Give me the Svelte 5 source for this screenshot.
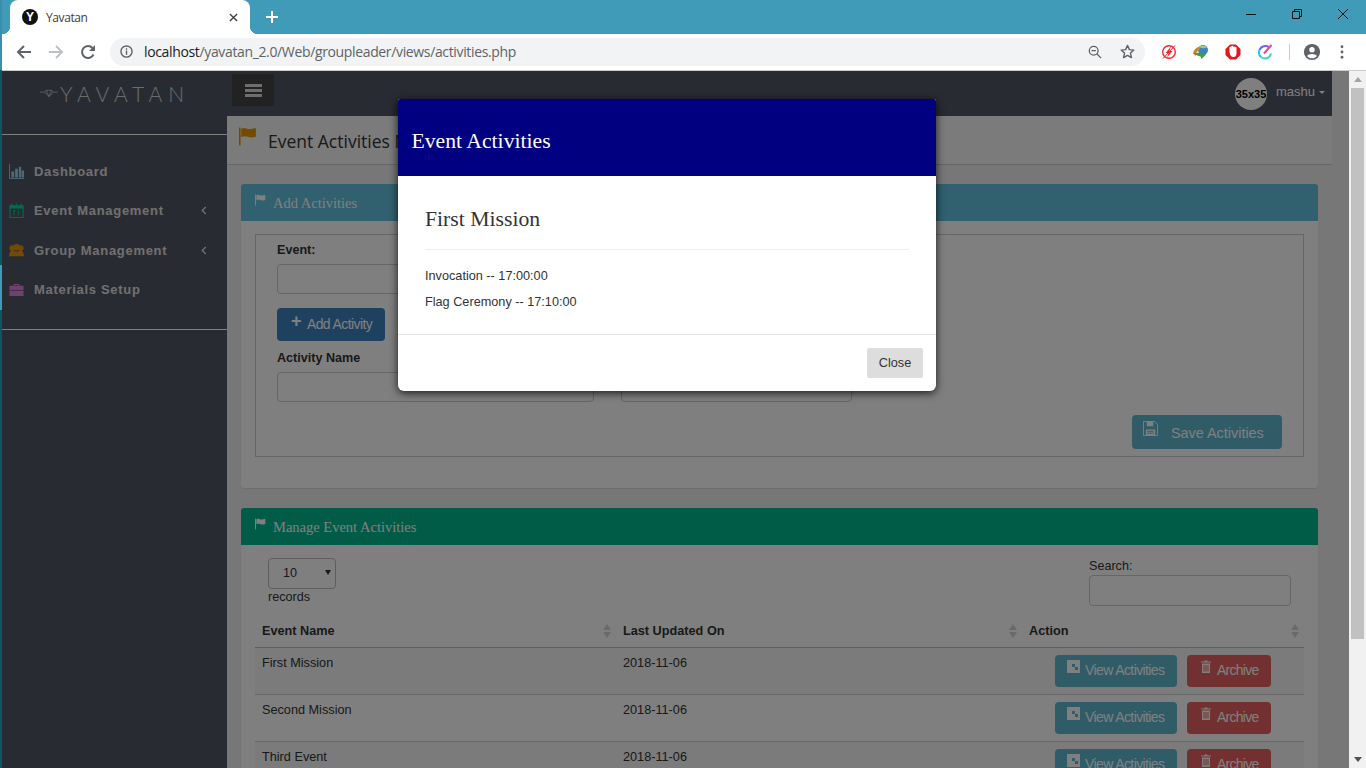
<script lang="ts">
  const navItems = [
    { label: "Dashboard", icon: "chart", more: false },
    { label: "Event Management", icon: "calendar", more: true },
    { label: "Group Management", icon: "group", more: true },
    { label: "Materials Setup", icon: "case", more: false }
  ];

  const events = [
    { name: "First Mission", updated: "2018-11-06" },
    { name: "Second Mission", updated: "2018-11-06" },
    { name: "Third Event", updated: "2018-11-06" }
  ];

  const activities = ["Invocation -- 17:00:00", "Flag Ceremony -- 17:10:00"];
</script>

{#snippet flag(cls)}
  <svg class={cls} viewBox="0 0 16 16" aria-hidden="true">
    <rect x="0" y="0" width="1.4" height="16" fill="currentColor" />
    <path d="M2 1c2-1 3-.6 5 0s3 .6 6-.4l2 0v7.4c-3 1.2-5 1-7 .3s-3.500-.8-6 .2z" fill="currentColor" />
  </svg>
{/snippet}

{#snippet sortArrows()}
  <svg class="sort" viewBox="0 0 8 14" aria-hidden="true">
    <path d="M4 0l4 6H0zM4 14l4-6H0z" fill="currentColor" />
  </svg>
{/snippet}

<div class="screen">
  <header class="chrome">
    <div class="tabstrip">
      <div class="tab">
        <span class="favicon">Y</span>
        <span class="tab-title">Yavatan</span>
        <svg class="tab-close" viewBox="0 0 10 10" aria-hidden="true">
          <path d="M1 1l8 8M9 1l-8 8" stroke="#3c4043" stroke-width="1.500" fill="none" />
        </svg>
      </div>
      <svg class="new-tab" viewBox="0 0 12 12" aria-hidden="true">
        <path d="M6 0v12M0 6h12" stroke="#fff" stroke-width="2" fill="none" />
      </svg>
      <div class="window-buttons">
        <svg viewBox="0 0 10 10" aria-hidden="true"><path d="M0 5.500h10" stroke="#111" fill="none" /></svg>
        <svg viewBox="0 0 10 10" aria-hidden="true">
          <path d="M.5 2.500h7v7h-7zM2.500 2.500v-2h7v7h-2" stroke="#111" fill="none" />
        </svg>
        <svg viewBox="0 0 10 10" aria-hidden="true"><path d="M0 0l10 10M10 0L0 10" stroke="#111" fill="none" /></svg>
      </div>
    </div>

    <div class="toolbar">
      <svg class="tool back" viewBox="0 0 16 16" aria-hidden="true">
        <path d="M15 8H2M8 2L2 8l6 6" stroke="#5f6368" stroke-width="2" fill="none" />
      </svg>
      <svg class="tool forward" viewBox="0 0 16 16" aria-hidden="true">
        <path d="M1 8h13M8 2l6 6-6 6" stroke="#bdc1c6" stroke-width="2" fill="none" />
      </svg>
      <svg class="tool reload" viewBox="0 0 16 16" aria-hidden="true">
        <path d="M13.500 10.500A6 6 0 1 1 12.500 4" stroke="#5f6368" stroke-width="2" fill="none" />
        <path d="M15 1v6H9z" fill="#5f6368" />
      </svg>
      <div class="omnibox">
        <svg class="info" viewBox="0 0 14 14" aria-hidden="true">
          <circle cx="7" cy="7" r="6" stroke="#5f6368" stroke-width="1.500" fill="none" />
          <path d="M7 6v4.500M7 3.500v1.500" stroke="#5f6368" stroke-width="1.500" fill="none" />
        </svg>
        <span class="url"><b>localhost</b>/yavatan_2.0/Web/groupleader/views/activities.php</span>
        <svg class="zoom-out" viewBox="0 0 16 16" aria-hidden="true">
          <circle cx="6.500" cy="6.500" r="5" stroke="#5f6368" stroke-width="1.500" fill="none" />
          <path d="M10 10l5 5M4 6.500h5" stroke="#5f6368" stroke-width="1.500" fill="none" />
        </svg>
        <svg class="star" viewBox="0 0 16 16" aria-hidden="true">
          <path d="M8 1.500l2 4.500 4.800.5-3.600 3.200 1 4.800L8 12.100l-4.200 2.400 1-4.800L1.200 6.500 6 6z" stroke="#5f6368" stroke-width="1.500" stroke-linejoin="round" fill="none" />
        </svg>
      </div>
      <div class="extensions">
        <svg viewBox="0 0 16 16" aria-hidden="true">
          <circle cx="8" cy="8" r="6.300" stroke="#ee2a2a" stroke-width="1.400" fill="none" />
          <path d="M10 2.500L4.500 9h3l-1.500 4.500L11.500 7h-3z" fill="#ee2a2a" />
          <path d="M2 14.500L14 1.500" stroke="#ee2a2a" stroke-width="1" />
        </svg>
        <svg viewBox="0 0 16 16" aria-hidden="true">
          <circle cx="10" cy="6" r="5" fill="#3b83c4" />
          <path d="M0 9.500C1 5 4 3 7 2.500L6.500 6C4.500 6.500 3 8.500 2.500 12z" fill="#c9872f" />
          <path d="M1.500 9.500c3-1 5-1 7 .2L10.500 8l2.500 2.500-4.500 4.500-1-2.500c-2-.8-4.500-1-6.500-3z" fill="#3f9d3a" />
          <path d="M6 3c2-2 6-2 8 .5-2 1-5 1-8-.5z" fill="#9bd15a" />
        </svg>
        <svg viewBox="0 0 16 16" aria-hidden="true">
          <path d="M5 .500h6L15.500 5v6L11 15.500H5L.5 11V5z" fill="#e3171d" />
          <path d="M4.500 8V3.500c0-1.400 1.600-1.400 1.600 0 0-2.200 2-2.200 2-.2 0-1.500 1.700-1.500 1.700.2 .2-1 1.700-1 1.700.2v6c0 2-1.300 3.300-3 3.300-2.400 0-3.500-1.500-4-5z" fill="#fff" />
        </svg>
        <svg viewBox="0 0 16 16" aria-hidden="true">
          <path d="M12 3.200A6.300 6.300 0 0 0 2.500 6" stroke="#7a5cf0" stroke-width="2" fill="none" />
          <path d="M2.500 6a6.300 6.300 0 0 0 2 7.500" stroke="#25c7e8" stroke-width="2" fill="none" />
          <path d="M4.500 13.500A6.300 6.300 0 0 0 14 9.500" stroke="#38d6c4" stroke-width="2" fill="none" />
          <path d="M7 9.500L14.500 1" stroke="#f0478f" stroke-width="2.200" fill="none" />
        </svg>
        <span class="ext-sep"></span>
        <svg viewBox="0 0 20 20" class="profile" aria-hidden="true">
          <circle cx="10" cy="10" r="9" fill="#5f6368" />
          <circle cx="10" cy="7.500" r="3" fill="#fff" />
          <path d="M4.500 14.500c1.500-3 9.500-3 11 0-1.500 1.800-3.500 2.500-5.500 2.500s-4-.7-5.500-2.500z" fill="#fff" />
        </svg>
        <svg viewBox="0 0 4 16" class="kebab" aria-hidden="true">
          <circle cx="2" cy="2" r="1.600" fill="#5f6368" />
          <circle cx="2" cy="8" r="1.600" fill="#5f6368" />
          <circle cx="2" cy="14" r="1.600" fill="#5f6368" />
        </svg>
      </div>
    </div>
  </header>

  <div class="viewport">
    <div class="page">
      <aside class="sidebar">
        <div class="brand">
          <svg viewBox="0 0 20 10" aria-hidden="true">
            <path d="M0 4h5l2-2h6l2 2h5M5 4l5 5 5-5M7 2l3 7 3-7" stroke="#d8d8d8" stroke-width=".8" fill="none" />
          </svg>
          <span>YAVATAN</span>
        </div>
        <nav class="nav">
          {#each navItems as item}
            <a class="nav-item" href="#top">
              <svg class="nav-icon {item.icon}" viewBox="0 0 16 16" aria-hidden="true">
                {#if item.icon === "chart"}
                  <path d="M.5 0v15.500H16" stroke="currentColor" fill="none" />
                  <path d="M2.500 8h3v6.500h-3zM6.500 5h3v9.500h-3zM10.500 3h2.500v11.500h-2.500zM13.500 7H16v7.500h-2.500z" fill="currentColor" />
                {:else if item.icon === "calendar"}
                  <path d="M1 3h14v12.500H1zM3 3V.5M8 3V.5M13 3V.5" stroke="currentColor" stroke-width="1.200" fill="none" />
                  <path d="M1 2.500h14V6H1z" fill="currentColor" />
                  <path d="M4.500 8h2L5 10c1.500 0 1.500 3-1 2.500M10 8v5" stroke="currentColor" fill="none" />
                {:else if item.icon === "group"}
                  <circle cx="3.500" cy="5.500" r="3" fill="currentColor" />
                  <circle cx="12.500" cy="5.500" r="3" fill="currentColor" />
                  <circle cx="8" cy="4.500" r="3.500" fill="currentColor" />
                  <path d="M0 14c0-4 2-6 3.500-6S5 9 8 9s3-1 4.500-1S16 10 16 14z" fill="currentColor" />
                {:else}
                  <path d="M5 4V2h6v2h4.500v11H.5V4zM6.200 4h3.600V3.200H6.200z" fill="currentColor" fill-rule="evenodd" />
                  <path d="M.5 9h15" stroke="#525664" stroke-width=".8" />
                {/if}
              </svg>
              <span class="nav-label">{item.label}</span>
              {#if item.more}
                <svg class="chev" viewBox="0 0 6 10" aria-hidden="true">
                  <path d="M5 1L1 5l4 4" stroke="currentColor" stroke-width="1.500" fill="none" />
                </svg>
              {/if}
            </a>
          {/each}
        </nav>
      </aside>

      <div class="content">
        <div class="topbar">
          <button class="burger" type="button" aria-label="Toggle menu"><i></i><i></i><i></i></button>
          <div class="user">
            <span class="avatar">35x35</span>
            <span class="user-name">mashu</span>
            <span class="caret"></span>
          </div>
        </div>

        <div class="page-title">
          {@render flag("title-flag")}
          <h1>Event Activities Management</h1>
        </div>

        <main class="main">
          <section class="panel">
            <h2 class="panel-head info-head">{@render flag("head-flag")}Add Activities</h2>
            <div class="panel-body form-body">
              <div class="fieldset">
                <label class="field-label" for="event">Event:</label>
                <input id="event" class="text-input event-input" type="text" />
                <button class="btn add-btn" type="button"><span class="plus">+</span>Add Activity</button>
                <div class="activity-row">
                  <div class="activity-col">
                    <label class="field-label" for="activity">Activity Name</label>
                    <input id="activity" class="text-input name-input" type="text" />
                  </div>
                  <div class="activity-col">
                    <label class="field-label" for="time">Time</label>
                    <input id="time" class="text-input time-input" type="text" />
                  </div>
                </div>
                <div class="save-row">
                  <button class="btn save-btn" type="button">
                    <svg viewBox="0 0 16 16" aria-hidden="true">
                      <path d="M.5.5h12l3 3v12H.5z" stroke="currentColor" fill="none" />
                      <path d="M4 .5h7v5H4zM3 9h10v6.500H3z" fill="currentColor" />
                      <path d="M4.500 11h7M4.500 13h7" stroke="#60b8d0" />
                    </svg>
                    Save Activities
                  </button>
                </div>
              </div>
            </div>
          </section>

          <section class="panel">
            <h2 class="panel-head success-head">{@render flag("head-flag")}Manage Event Activities</h2>
            <div class="panel-body table-body">
              <div class="table-controls">
                <div>
                  <div class="length-select"><span>10</span><i></i></div>
                  <div class="records">records</div>
                </div>
                <div>
                  <label class="search-label" for="search">Search:</label>
                  <input id="search" class="text-input search-input" type="text" />
                </div>
              </div>
              <table>
                <thead>
                  <tr>
                    <th class="col-name"><div>Event Name{@render sortArrows()}</div></th>
                    <th class="col-date"><div>Last Updated On{@render sortArrows()}</div></th>
                    <th><div>Action{@render sortArrows()}</div></th>
                  </tr>
                </thead>
                <tbody>
                  {#each events as row}
                    <tr>
                      <td>{row.name}</td>
                      <td>{row.updated}</td>
                      <td>
                        <div class="row-actions">
                          <button class="btn view-btn" type="button">
                            <svg viewBox="0 0 13 13" aria-hidden="true">
                              <path d="M0 0h13v13H0zM5 4v3h3v3h3V7H8V4z" fill="currentColor" fill-rule="evenodd" />
                            </svg>
                            View Activities
                          </button>
                          <button class="btn archive-btn" type="button">
                            <svg viewBox="0 0 10 13" aria-hidden="true">
                              <path d="M3.500 1.500V.5h3v1H10v1H0v-1zM1 3.500h8V13H1z" fill="currentColor" />
                              <path d="M3 5v6.500M5 5v6.500M7 5v6.500" stroke="#e46060" />
                            </svg>
                            Archive
                          </button>
                        </div>
                      </td>
                    </tr>
                  {/each}
                </tbody>
              </table>
            </div>
          </section>
        </main>
      </div>

      <div class="backdrop"></div>

      <div class="modal" role="dialog" aria-labelledby="modal-title">
        <div class="modal-head"><h3 id="modal-title">Event Activities</h3></div>
        <div class="modal-body">
          <h4>First Mission</h4>
          <hr />
          {#each activities as line}
            <p>{line}</p>
          {/each}
        </div>
        <div class="modal-foot">
          <button class="close-btn" type="button">Close</button>
        </div>
      </div>
    </div>

    <div class="scrollbar">
      <span class="arrow up"></span>
      <span class="thumb"></span>
      <span class="arrow down"></span>
    </div>
  </div>
</div>

<style>
  :global(body) {
    overflow: hidden;
    background: #0c5666;
  }

  .screen {
    display: flex;
    flex-direction: column;
    box-sizing: border-box;
    width: 1366px;
    height: 768px;
    overflow: hidden;
    padding-left: 2px;
    background: linear-gradient(#3a8ea8 0 70px, #0c5666 70px 265px, #3f9bb7 265px 310px, #0c5666 310px);
    font-family: "Liberation Sans", Arial, sans-serif;
  }

  .chrome {
    flex: none;
    background: #fff;
  }

  .tabstrip {
    display: flex;
    align-items: center;
    height: 34px;
    background: #3f9bb7;
  }

  .tab {
    position: relative;
    display: flex;
    align-items: center;
    box-sizing: border-box;
    width: 240px;
    height: 34px;
    margin-left: 8px;
    padding: 0 12px;
    border-radius: 8px 8px 0 0;
    background: #fff;
  }

  .tab::before,
  .tab::after {
    position: absolute;
    bottom: 0;
    width: 8px;
    height: 8px;
    content: "";
  }

  .tab::before {
    left: -8px;
    background: radial-gradient(circle at 0 0, transparent 8px, #fff 8.500px);
  }

  .tab::after {
    right: -8px;
    background: radial-gradient(circle at 100% 0, transparent 8px, #fff 8.500px);
  }

  .favicon {
    display: grid;
    place-items: center;
    width: 16px;
    height: 16px;
    border-radius: 50%;
    background: #111;
    color: #fff;
    font-size: 12px;
    font-weight: 700;
    line-height: 1;
  }

  .tab-title {
    flex: 1;
    margin-left: 8px;
    color: #3c4043;
    font-family: "Open Sans", sans-serif;
    font-size: 12px;
    letter-spacing: -.4px;
  }

  .tab-close {
    width: 9px;
    height: 9px;
  }

  .new-tab {
    width: 12px;
    height: 12px;
    margin-left: 16px;
  }

  .window-buttons {
    display: flex;
    gap: 36px;
    margin-left: auto;
    margin-right: 18px;
    margin-top: -6px;
  }

  .window-buttons svg {
    width: 10px;
    height: 10px;
  }

  .toolbar {
    display: flex;
    align-items: center;
    box-sizing: border-box;
    height: 37px;
    padding: 0 0 1px 14px;
    border-bottom: 1px solid #ccc;
  }

  .tool {
    flex: none;
    width: 16px;
    height: 16px;
  }

  .forward {
    margin-left: 16px;
  }

  .reload {
    margin-left: 16px;
  }

  .omnibox {
    display: flex;
    flex: none;
    align-items: center;
    box-sizing: border-box;
    width: 1035px;
    height: 28px;
    margin-left: 14px;
    padding: 0 10px 0 10px;
    border-radius: 14px;
    background: #f1f3f4;
  }

  .info {
    width: 13px;
    height: 13px;
  }

  .url {
    flex: 1;
    margin-left: 11px;
    color: #5f6368;
    font-family: "Open Sans", sans-serif;
    font-size: 14px;
    letter-spacing: -.355px;
    white-space: nowrap;
  }

  .url b {
    color: #202124;
    font-weight: 400;
  }

  .zoom-out {
    width: 14px;
    height: 14px;
  }

  .star {
    width: 15px;
    height: 15px;
    margin-left: 18px;
  }

  .extensions {
    display: flex;
    align-items: center;
    margin-left: 16px;
  }

  .extensions svg {
    flex: none;
    width: 16px;
    height: 16px;
    margin-right: 16px;
  }

  .ext-sep {
    width: 1px;
    height: 16px;
    margin-right: 13px;
    background: #c8c8c8;
  }

  .extensions .profile {
    width: 18px;
    height: 18px;
    margin-right: 19px;
  }

  .extensions .kebab {
    width: 4px;
    height: 14px;
    margin-right: 0;
  }

  .viewport {
    display: flex;
    flex: 1;
    min-height: 0;
  }

  .page {
    position: relative;
    display: flex;
    flex: 1;
    box-sizing: border-box;
    min-width: 0;
    overflow: hidden;
    padding-right: 17px;
    background: #eee;
  }

  .sidebar {
    flex: none;
    width: 225px;
    background: #525664;
    color: #e0e0e0;
  }

  .brand {
    display: flex;
    align-items: center;
    box-sizing: border-box;
    height: 64px;
    padding: 0 0 19px 38px;
    border-bottom: 1px solid #fff;
    color: #d8d8d8;
    font-family: Lato, sans-serif;
    font-size: 21px;
    font-weight: 300;
    letter-spacing: 5.800px;
  }

  .brand svg {
    width: 18px;
    height: 10px;
    margin-right: 2px;
  }

  .nav {
    box-sizing: border-box;
    height: 195px;
    padding-top: 16.600px;
    border-bottom: 1px solid #fff;
  }

  .nav-item {
    display: flex;
    align-items: center;
    height: 39.400px;
    padding-left: 7px;
    color: inherit;
    font-size: 13px;
    font-weight: 700;
    letter-spacing: .7px;
    text-decoration: none;
  }

  .nav-icon {
    flex: none;
    width: 15px;
    height: 15px;
    margin-right: 10px;
  }

  .chart {
    color: #9ed4ec;
  }

  .calendar {
    color: #00d6a0;
  }

  .group {
    color: #e89400;
  }

  .case {
    color: #e080e0;
  }

  .nav-label {
    width: 167px;
  }

  .chev {
    width: 6px;
    height: 9px;
  }

  .content {
    flex: 1;
    min-width: 0;
  }

  .topbar {
    display: flex;
    align-items: center;
    justify-content: space-between;
    box-sizing: border-box;
    height: 45px;
    padding: 0 7px 0 5px;
    background: #525664;
  }

  .burger {
    display: flex;
    flex-direction: column;
    justify-content: center;
    align-items: center;
    gap: 2px;
    box-sizing: border-box;
    width: 42px;
    height: 32px;
    margin-top: -7px;
    border: 0;
    padding: 0;
    background: #454545;
  }

  .burger i {
    display: block;
    width: 17px;
    height: 3px;
    background: #ddd;
  }

  .user {
    display: flex;
    align-items: center;
  }

  .avatar {
    display: grid;
    place-items: center;
    width: 32px;
    height: 32px;
    margin-top: 1px;
    border-radius: 50%;
    background: #fff;
    color: #000;
    font-size: 11px;
    font-weight: 700;
    white-space: nowrap;
  }

  .user-name {
    margin: -4px 0 0 9px;
    color: #fff;
    font-size: 13px;
  }

  .caret {
    width: 0;
    height: 0;
    margin: -2px 0 0 4px;
    border-top: 3px solid #fff;
    border-right: 3px solid transparent;
    border-left: 3px solid transparent;
  }

  .page-title {
    display: flex;
    box-sizing: border-box;
    height: 49px;
    padding-left: 12px;
    border-bottom: 1px solid #ccc;
    background: #f6f6f6;
    color: #333;
  }

  .title-flag {
    flex: none;
    width: 18px;
    height: 19px;
    margin-top: 11px;
    color: #e89400;
  }

  .page-title h1 {
    margin: 14px 0 0 11px;
    font-family: "Open Sans", sans-serif;
    font-size: 17.500px;
    font-weight: 400;
    line-height: 22px;
  }

  .main {
    padding: 19px 14px 0;
  }

  .panel {
    margin-bottom: 20px;
    border-radius: 3px;
    background: #fff;
    box-shadow: 0 1px 1px rgb(0 0 0 / 8%);
  }

  .panel-head {
    display: flex;
    align-items: center;
    height: 37px;
    margin: 0;
    padding: 2px 0 0 14px;
    box-sizing: border-box;
    border-radius: 3px 3px 0 0;
    color: #fff;
    font-family: "Liberation Serif", serif;
    font-size: 14.500px;
    font-weight: 400;
  }

  .head-flag {
    width: 11px;
    height: 12px;
    margin: -8px 7px 0 0;
    color: #fff;
  }

  .info-head {
    background: #62c2dc;
  }

  .success-head {
    background: #00b88f;
  }

  .form-body {
    height: 267px;
    box-sizing: border-box;
    padding: 13px 14px 0;
  }

  .fieldset {
    box-sizing: border-box;
    height: 223px;
    padding: 7px 21px 0;
    border: 1px solid #ccc;
  }

  .field-label {
    display: block;
    color: #333;
    font-size: 12.600px;
    font-weight: 700;
    line-height: 16px;
  }

  .text-input {
    display: block;
    box-sizing: border-box;
    height: 30px;
    border: 1px solid #ccc;
    border-radius: 4px;
    background: #fff;
  }

  .event-input {
    width: 317px;
    margin-top: 6px;
  }

  .btn {
    display: inline-flex;
    align-items: center;
    border: 0;
    border-radius: 4px;
    color: #fff;
    font-family: "Liberation Sans", Arial, sans-serif;
    font-size: 14px;
    white-space: nowrap;
  }

  .add-btn {
    width: 108px;
    height: 33px;
    margin-top: 14px;
    padding: 0 0 2px 14px;
    background: #3c82c0;
    letter-spacing: -.6px;
  }

  .plus {
    margin: -6px 6px 0 0;
    font-size: 18px;
    font-weight: 700;
    line-height: 1;
  }

  .activity-row {
    display: flex;
    gap: 27px;
    margin-top: 8px;
  }

  .activity-col .field-label {
    margin: 1px 0 6px;
  }

  .name-input {
    width: 317px;
  }

  .time-input {
    width: 231px;
  }

  .save-row {
    display: flex;
    justify-content: flex-end;
    margin-top: 13px;
  }

  .save-btn {
    width: 150px;
    height: 34px;
    padding: 1px 0 0 11px;
    background: #60b8d0;
    font-size: 14.400px;
  }

  .save-btn svg {
    width: 15px;
    height: 15px;
    margin: -8px 13px 0 0;
  }

  .table-body {
    padding: 13px 14px 0;
  }

  .table-controls {
    display: flex;
    justify-content: space-between;
    height: 48px;
    padding: 0 13px;
    color: #333;
    font-size: 12.600px;
  }

  .length-select {
    display: flex;
    align-items: center;
    justify-content: space-between;
    box-sizing: border-box;
    width: 68px;
    height: 31px;
    padding: 0 4px 2px 14px;
    border: 1px solid #bbb;
    border-radius: 4px;
  }

  .length-select i {
    width: 0;
    height: 0;
    border-top: 5px solid #333;
    border-right: 3px solid transparent;
    border-left: 3px solid transparent;
  }

  .records {
    margin-top: 1px;
    line-height: 14px;
  }

  .search-label {
    display: block;
    height: 17px;
    line-height: 17px;
  }

  .search-input {
    width: 202px;
    height: 31px;
  }

  table {
    width: 100%;
    margin-top: 6px;
    border-collapse: collapse;
    table-layout: fixed;
    color: #333;
    font-size: 12.700px;
  }

  th {
    box-sizing: border-box;
    height: 35px;
    padding: 0 5px 0 7px;
    border-bottom: 1px solid #bbb;
    font-weight: 700;
    text-align: left;
  }

  th div {
    display: flex;
    align-items: center;
    justify-content: space-between;
    padding-top: 4px;
  }

  .col-name {
    width: 361px;
  }

  .col-date {
    width: 406px;
  }

  .sort {
    width: 8px;
    height: 14px;
    color: #d4d4d4;
  }

  td {
    height: 39px;
    padding: 7px 7px 0;
    border-bottom: 1px solid #ccc;
    vertical-align: top;
    line-height: 17px;
  }

  tbody tr:nth-child(odd) td {
    background: #f6f6f6;
  }

  .row-actions {
    display: flex;
    gap: 10px;
    margin-left: 26px;
  }

  .view-btn,
  .archive-btn {
    height: 32px;
    padding: 0 0 2px;
    letter-spacing: -.6px;
  }

  .view-btn {
    width: 122px;
    padding-left: 12px;
    background: #60b8d0;
  }

  .archive-btn {
    width: 84px;
    padding-left: 14px;
    background: #e46060;
    letter-spacing: -.75px;
  }

  .view-btn svg {
    width: 13px;
    height: 13px;
    margin: -7px 5px 0 0;
  }

  .archive-btn svg {
    width: 10px;
    height: 13px;
    margin: -7px 6px 0 0;
  }

  .backdrop {
    position: absolute;
    inset: 0;
    background: rgb(0 0 0 / 50%);
  }

  .modal {
    position: absolute;
    top: 28px;
    left: 396px;
    width: 538px;
    overflow: hidden;
    border-radius: 2px 2px 6px 6px;
    background: #fff;
    box-shadow: 0 2px 9px rgb(0 0 0 / 80%);
  }

  .modal-head {
    display: flex;
    align-items: flex-end;
    height: 77px;
    padding: 0 14px 22px 13.500px;
    box-sizing: border-box;
    background: #000080;
    color: #fff;
  }

  .modal-head h3 {
    margin: 0;
    font-family: "Liberation Serif", serif;
    font-size: 21.700px;
    font-weight: 400;
    line-height: 26px;
  }

  .modal-body {
    box-sizing: border-box;
    height: 159px;
    padding: 30px 27px 0;
    border-bottom: 1px solid #e5e5e5;
    color: #333;
    font-size: 12.700px;
  }

  .modal-body h4 {
    margin: 0;
    font-family: "Liberation Serif", serif;
    font-size: 21.700px;
    font-weight: 400;
    line-height: 26px;
  }

  .modal-body hr {
    height: 1px;
    margin: 17px 0 19px;
    border: 0;
    background: #eee;
  }

  .modal-body p {
    margin: 0 0 12px;
    line-height: 14px;
  }

  .modal-foot {
    display: flex;
    justify-content: flex-end;
    height: 56px;
    padding: 13px 13px 0;
    box-sizing: border-box;
  }

  .close-btn {
    width: 56px;
    height: 30px;
    border: 0;
    border-radius: 2px;
    background: #ddd;
    color: #333;
    font-family: "Liberation Sans", Arial, sans-serif;
    font-size: 12.700px;
  }

  .scrollbar {
    display: flex;
    flex: none;
    flex-direction: column;
    align-items: center;
    width: 17px;
    background: #f1f1f1;
  }

  .arrow {
    flex: none;
    width: 0;
    height: 0;
    border-right: 4px solid transparent;
    border-left: 4px solid transparent;
  }

  .arrow.up {
    margin: 6px 0 6px;
    border-bottom: 5px solid #a3a3a3;
  }

  .arrow.down {
    margin: auto 0 6px;
    border-top: 5px solid #505050;
  }

  .thumb {
    flex: none;
    width: 13px;
    height: 551px;
    background: #c1c1c1;
  }
</style>
